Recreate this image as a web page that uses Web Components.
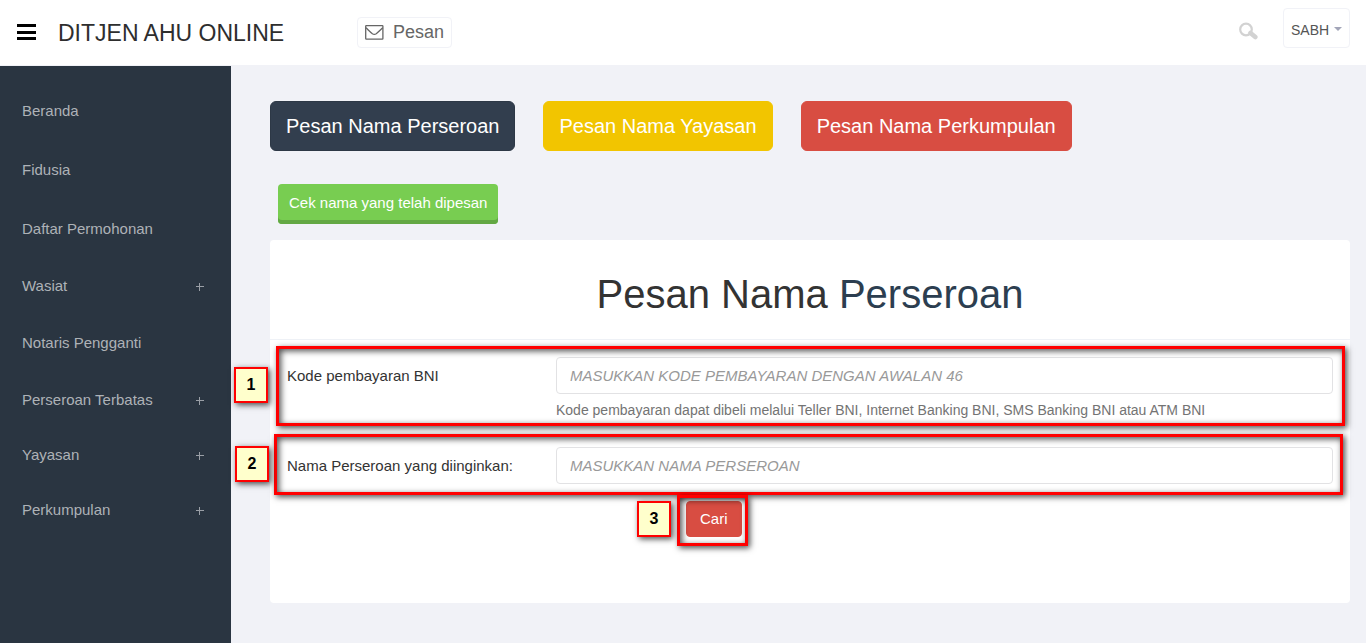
<!DOCTYPE html>
<html lang="id">
<head>
<meta charset="utf-8">
<meta name="viewport" content="width=device-width, initial-scale=1">
<title>Ditjen AHU Online - Pesan Nama Perseroan</title>
<style>
  body { margin: 0; font-family: "Liberation Sans", Arial, sans-serif; background: #f1f2f7; color: #333; }
  .code { --ring: -11px -12px -6px -11px; --badge-x: -53px; --badge-y: 10px; }
  .name { --ring: -13px -10px -11px -13px; --badge-x: -52px; --badge-y: -1px; }
  .submit { --ring: -6px -6px -9px -9px; --badge-x: -49px; --badge-y: 0px; }
</style>
</head>
<body>
<ahu-app>
  <ahu-header slot="header" brand="DITJEN AHU ONLINE"></ahu-header>
  <ahu-nav slot="nav">
    <ahu-nav-item>Beranda</ahu-nav-item>
    <ahu-nav-item>Fidusia</ahu-nav-item>
    <ahu-nav-item>Daftar Permohonan</ahu-nav-item>
    <ahu-nav-item group>Wasiat</ahu-nav-item>
    <ahu-nav-item>Notaris Pengganti</ahu-nav-item>
    <ahu-nav-item group>Perseroan Terbatas</ahu-nav-item>
    <ahu-nav-item group>Yayasan</ahu-nav-item>
    <ahu-nav-item group>Perkumpulan</ahu-nav-item>
  </ahu-nav>
  <ahu-button slot="tabs" size="large" tone="dark">Pesan Nama Perseroan</ahu-button>
  <ahu-button slot="tabs" size="large" tone="yellow">Pesan Nama Yayasan</ahu-button>
  <ahu-button slot="tabs" size="large" tone="red">Pesan Nama Perkumpulan</ahu-button>
  <ahu-button slot="check" tone="green">Cek nama yang telah dipesan</ahu-button>
  <ahu-card heading="Pesan Nama" subject="Perseroan">
    <ahu-callout class="code" number="1">
      <ahu-field label="Kode pembayaran BNI" placeholder="MASUKKAN KODE PEMBAYARAN DENGAN AWALAN 46"
        help="Kode pembayaran dapat dibeli melalui Teller BNI, Internet Banking BNI, SMS Banking BNI atau ATM BNI"></ahu-field>
    </ahu-callout>
    <ahu-callout class="name" number="2">
      <ahu-field label="Nama Perseroan yang diinginkan:" placeholder="MASUKKAN NAMA PERSEROAN"></ahu-field>
    </ahu-callout>
    <ahu-callout class="submit" slot="actions" number="3">
      <ahu-button tone="red">Cari</ahu-button>
    </ahu-callout>
  </ahu-card>
</ahu-app>

<script>
  const define = (name, render) => customElements.define(name, class extends HTMLElement {
    constructor() {
      super();
      this.attachShadow({ mode: 'open' });
    }
    connectedCallback() {
      this.shadowRoot.innerHTML = '<style>*{box-sizing:border-box}</style>' + render(this);
    }
  });

  define('ahu-app', () => `
    <style>
      :host { display: grid; grid-template: auto 1fr / 231px minmax(0, 1fr); min-height: 100vh; }
      header { grid-column: 1 / -1; }
      aside { background: #2a3541; }
      main { display: flex; flex-direction: column; padding: 35px 16px 40px 39px; }
      .tabs { display: flex; flex-wrap: wrap; gap: 28px; }
      .check { padding: 33px 8px 16px; }
      .content { display: grid; flex: 1; }
    </style>
    <header><slot name="header"></slot></header>
    <aside><slot name="nav"></slot></aside>
    <main>
      <div class="tabs"><slot name="tabs"></slot></div>
      <div class="check"><slot name="check"></slot></div>
      <div class="content"><slot></slot></div>
    </main>`);

  define('ahu-header', el => `
    <style>
      :host { display: flex; align-items: center; height: 66px; padding: 0 16px 0 17px; background: #fff; border-bottom: 1px solid #f1f2f7; box-sizing: border-box; }
      button { font: inherit; background: none; border: 0; padding: 0; display: flex; align-items: center; }
      svg { display: block; }
      .brand { margin-left: 22px; width: 299px; font-size: 23px; line-height: 26px; color: #2e2e2e; text-decoration: none; white-space: nowrap; }
      .mail { gap: 9px; height: 31px; padding: 0 7px; border: 1px solid #f1f2f7; border-radius: 4px; font-size: 18px; color: #666; text-decoration: none; display: flex; align-items: center; }
      .search { margin: 0 25px 4px auto; }
      .account { position: relative; margin-bottom: 9px; }
      select { appearance: none; display: block; font: inherit; font-size: 14px; color: #555; background: #fff; width: 67px; height: 40px; padding: 4px 7px 0; border: 1px solid #f1f2f7; border-radius: 4px; }
      .caret { position: absolute; right: 8px; top: 19px; pointer-events: none; }
    </style>
    <button type="button" aria-label="Menu"><svg width="19" height="17" viewBox="0 0 19 17"><path d="M0 0h19v3H0zM0 7h19v3H0zM0 13h19v3H0z"/></svg></button>
    <a class="brand" href="#">${el.getAttribute('brand')}</a>
    <a class="mail" href="#"><svg width="19" height="15" viewBox="0 0 19 15" fill="none" stroke="#666" stroke-width="1.3"><rect x=".7" y=".7" width="17.2" height="13.4" rx=".6"/><path d="M1 2.800c2.600 2.500 4.600 4.600 6.400 6q1.900 1.300 3.800 0c1.900-1.500 4-3.600 6.600-6"/></svg>Pesan</a>
    <button class="search" type="button" aria-label="Cari"><svg width="19" height="18" viewBox="0 0 19 18" fill="none" stroke="#d2d2d2"><circle cx="7" cy="7.500" r="5.800" stroke-width="2.200"/><path d="M11.500 11l4.800 4" stroke-width="4.600" stroke-linecap="round"/></svg></button>
    <div class="account">
      <select aria-label="Akun"><option>SABH</option></select>
      <svg class="caret" width="8" height="4" viewBox="0 0 8 4"><path d="M0 0h8L4 4z" fill="#a2a5b8"/></svg>
    </div>`);

  define('ahu-nav', () => `
    <style>
      :host { display: block; }
      nav { display: flex; flex-direction: column; padding-top: 15px; }
    </style>
    <nav><slot></slot></nav>`);

  define('ahu-nav-item', el => `
    <style>
      :host { display: block; }
      a { display: flex; align-items: center; justify-content: space-between; height: 59px; padding: 0 27px 0 22px; color: #aeb2b7; font-size: 15px; text-decoration: none; }
      :host([group]) a { height: 55px; }
      svg { display: block; margin-top: 2px; }
    </style>
    <a href="#"><span><slot></slot></span>${el.hasAttribute('group') ? '<svg width="9" height="9" viewBox="0 0 9 9"><path d="M1 4h8v1H1zM4 1h1v8H4z" fill="#9a9fa6"/></svg>' : ''}</a>`);

  define('ahu-button', () => `
    <style>
      :host { display: inline-block; vertical-align: top; }
      button { display: block; font: inherit; font-size: 15px; line-height: 20px; height: 36px; padding: 0 13px; color: #fff; border: 1px solid var(--edge); background: var(--fill); border-radius: 4px; white-space: nowrap; }
      :host([size=large]) button { font-size: 20px; height: 50px; padding: 0 15px; border-radius: 6px; }
      :host([tone=dark]) { --fill: #323e4e; --edge: #2d3846; }
      :host([tone=yellow]) { --fill: #f2c500; --edge: #f2c500; }
      :host([tone=red]) { --fill: #d84d42; --edge: #d84d42; }
      :host([tone=green]) { --fill: #78cd51; --edge: #78cd51; }
      :host([tone=green]) button { height: 40px; padding: 0 11px 2px; border: 0; box-shadow: inset 0 -4px #63a844; }
    </style>
    <button type="button"><slot></slot></button>`);

  define('ahu-card', el => `
    <style>
      :host { display: block; background: #fff; border-radius: 4px; }
      h1 { margin: 0; padding: 31px 15px 22px; font-size: 40px; line-height: 46px; font-weight: 400; text-align: center; color: #333; border-bottom: 1px solid #eff2f7; }
      h1 span { color: #2c3e50; }
      form { display: grid; gap: 17px; padding: 17px; }
      .fields { display: grid; gap: 27px; }
      .actions { padding-left: 399px; }
    </style>
    <h1>${el.getAttribute('heading')} <span>${el.getAttribute('subject')}</span></h1>
    <form>
      <div class="fields"><slot></slot></div>
      <div class="actions"><slot name="actions"></slot></div>
    </form>`);

  define('ahu-field', el => `
    <style>
      :host { display: grid; grid-template-columns: 269px minmax(0, 1fr); }
      label { font-size: 15px; line-height: 37px; color: #333; }
      input { display: block; width: 100%; height: 37px; padding: 0 13px; font: inherit; font-size: 15px; color: #333; background: #fff; border: 1px solid #e2e2e4; border-radius: 4px; }
      input::placeholder { color: #999; font-style: italic; opacity: 1; }
      p { margin: 6px 0 0; font-size: 14px; line-height: 20px; color: #737373; }
    </style>
    <label for="value">${el.getAttribute('label')}</label>
    <div>
      <input id="value" type="text" placeholder="${el.getAttribute('placeholder')}">
      ${el.hasAttribute('help') ? `<p>${el.getAttribute('help')}</p>` : ''}
    </div>`);

  /* Numbered red frame laid over the control it explains */
  define('ahu-callout', el => `
    <style>
      :host { display: block; position: relative; }
      :host([slot=actions]) { display: inline-block; }
      .ring { position: absolute; inset: var(--ring); border: 3px solid #f00; pointer-events: none; box-shadow: 2px 2px 6px rgba(0,0,0,.7), inset 2px 2px 6px rgba(0,0,0,.7); }
      .badge { position: absolute; left: var(--badge-x); top: var(--badge-y); width: 34px; height: 36px; border: 2px solid #f00; background: #ffc; color: #000; font-size: 16px; font-weight: 700; line-height: 32px; text-align: center; box-shadow: 2px 2px 6px rgba(0,0,0,.7); }
    </style>
    <slot></slot>
    <span class="ring"></span>
    <span class="badge">${el.getAttribute('number')}</span>`);
</script>
</body>
</html>
